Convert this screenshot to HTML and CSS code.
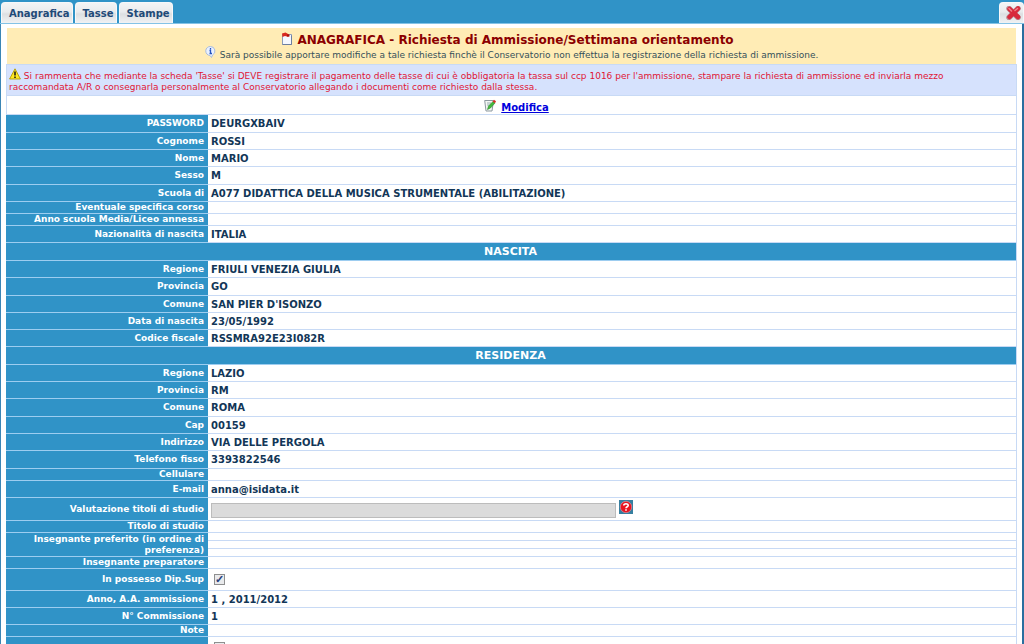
FILE: index.html
```html
<!DOCTYPE html>
<html lang="it">
<head>
<meta charset="utf-8">
<title>Anagrafica - Richiesta di Ammissione</title>
<link rel="stylesheet" href="styles.css">
</head>
<body>
<header class="topbar">
  <nav class="tabs">
    <a class="tab" href="#anagrafica">Anagrafica</a>
    <a class="tab" href="#tasse">Tasse</a>
    <a class="tab" href="#stampe">Stampe</a>
  </nav>
  <button class="close" type="button" aria-label="Chiudi">
    <svg width="15" height="14" viewBox="0 0 15 14"><path d="M3 2.500 12 11.500M12 2.500 3 11.500" stroke="#b9929a" stroke-width="5.500" stroke-linecap="round"/><path d="M3.500 3 12 11M12 2.500 3.500 11" stroke="#d8293c" stroke-width="4.500" stroke-linecap="round"/><path d="M3 2.500 5.500 5M11.500 2.500 9 4.500" stroke="#f0808a" stroke-width="1.500" stroke-linecap="round"/></svg>
  </button>
</header>
<main class="page">
  <section class="intro">
    <h1 class="title">
      <svg class="icon-doc" width="12" height="13" viewBox="0 0 12 13"><path d="M1.500 2.500h9v10h-9z" fill="#f5f8ff" stroke="#8b9cb8"/><path d="M1.500 12.500h9v-9" fill="none" stroke="#6d7f9f"/><path d="M1 1.500 4.500 0.500 8 2.500 7.500 5 4 4 1.500 5z" fill="#d92a20"/><path d="M6 2.500h2.500v2H6z" fill="#a8140f"/></svg>
      <span>ANAGRAFICA - Richiesta di Ammissione/Settimana orientamento</span>
    </h1>
    <p class="hint">
      <svg class="icon-info" width="11" height="12" viewBox="0 0 11 12"><path d="M5.500.5a4.500 4.500 0 0 1 2 8.500L6.500 11.500 5 9.500A4.500 4.500 0 0 1 5.500.5z" fill="#eaf1ff" stroke="#a9bcdc"/><path d="M5.500 2v1.500M4.500 4.500h1v3M4.500 7.500h2.500" fill="none" stroke="#2454c0" stroke-width="1.300"/></svg>
      <span>Sarà possibile apportare modifiche a tale richiesta finchè il Conservatorio non effettua la registrazione della richiesta di ammissione.</span>
    </p>
  </section>
  <p class="warning"><svg class="icon-warn" width="12" height="12" viewBox="0 0 12 12"><path d="M6 .8 11.400 11H.6z" fill="#ffe91f" stroke="#b7a113" stroke-linejoin="round"/><path d="M6 3.500v4M6 8.500v1.500" stroke="#111" stroke-width="1.500"/></svg> Si rammenta che mediante la scheda 'Tasse' si DEVE registrare il pagamento delle tasse di cui è obbligatoria la tassa sul ccp 1016 per l'ammissione, stampare la richiesta di ammissione ed inviarla mezzo<br>raccomandata A/R o consegnarla personalmente al Conservatorio allegando i documenti come richiesto dalla stessa.</p>
  <div class="actions">
    <svg width="12" height="13" viewBox="0 0 12 13"><path d="M.7 1.500h8.800L8 12H2z" fill="#f4f7f4" stroke="#8d99a0"/><path d="M3 4h4M3 6h2.500" stroke="#9aaeb5"/><path d="M3.500 10.500 4.500 7 9 2.500l2 1.500-4.500 5z" fill="#42b83c" stroke="#2d8b2c" stroke-width=".6"/><path d="M8.500 2.500 10 .7l2 1.500L11 4.300z" fill="#d5302b"/></svg>
    <a class="edit" href="#modifica">Modifica</a>
  </div>
  <table class="record">
    <colgroup><col class="col-label"><col></colgroup>
    <tbody>
      <tr class="tall"><th scope="row">PASSWORD</th><td>DEURGXBAIV</td></tr>
      <tr><th scope="row">Cognome</th><td>ROSSI</td></tr>
      <tr><th scope="row">Nome</th><td>MARIO</td></tr>
      <tr class="tall"><th scope="row">Sesso</th><td>M</td></tr>
      <tr><th scope="row">Scuola di</th><td>A077 DIDATTICA DELLA MUSICA STRUMENTALE (ABILITAZIONE)</td></tr>
      <tr class="empty"><th scope="row">Eventuale specifica corso</th><td></td></tr>
      <tr class="empty"><th scope="row">Anno scuola Media/Liceo annessa</th><td></td></tr>
      <tr><th scope="row">Nazionalità di nascita</th><td>ITALIA</td></tr>
    </tbody>
    <tbody>
      <tr class="tall"><th class="section" colspan="2" scope="rowgroup">NASCITA</th></tr>
      <tr><th scope="row">Regione</th><td>FRIULI VENEZIA GIULIA</td></tr>
      <tr class="tall"><th scope="row">Provincia</th><td>GO</td></tr>
      <tr><th scope="row">Comune</th><td>SAN PIER D'ISONZO</td></tr>
      <tr><th scope="row">Data di nascita</th><td>23/05/1992</td></tr>
      <tr><th scope="row">Codice fiscale</th><td>RSSMRA92E23I082R</td></tr>
    </tbody>
    <tbody>
      <tr class="tall"><th class="section" colspan="2" scope="rowgroup">RESIDENZA</th></tr>
      <tr><th scope="row">Regione</th><td>LAZIO</td></tr>
      <tr><th scope="row">Provincia</th><td>RM</td></tr>
      <tr class="tall"><th scope="row">Comune</th><td>ROMA</td></tr>
      <tr><th scope="row">Cap</th><td>00159</td></tr>
      <tr><th scope="row">Indirizzo</th><td>VIA DELLE PERGOLA</td></tr>
      <tr class="tall"><th scope="row">Telefono fisso</th><td>3393822546</td></tr>
      <tr class="empty"><th scope="row">Cellulare</th><td></td></tr>
      <tr><th scope="row">E-mail</th><td>anna@isidata.it</td></tr>
      <tr class="field"><th scope="row"><label for="titoli">Valutazione titoli di studio</label></th><td>
        <div class="field-line">
          <input class="text" id="titoli" type="text" disabled>
          <button class="help" type="button" aria-label="Aiuto"><svg width="14" height="14" viewBox="0 0 14 14"><path d="M0 0h14v14H0z" fill="#367fa0"/><circle cx="7" cy="7" r="5.700" fill="#e8151f" stroke="#d98a95" stroke-width=".8"/><path d="M4.800 5.500C4.800 3.200 9.300 3.300 9.200 5.500 9.200 6.800 7 6.700 7 8.300M7 9.300v1.500" fill="none" stroke="#fff" stroke-width="1.600"/></svg></button>
        </div></td></tr>
      <tr class="empty"><th scope="row">Titolo di studio</th><td></td></tr>
      <tr class="choice"><th scope="rowgroup" rowspan="3">Insegnante preferito (in ordine di<br>preferenza)</th><td></td></tr>
      <tr class="choice"><td></td></tr>
      <tr class="choice"><td></td></tr>
      <tr class="empty"><th scope="row">Insegnante preparatore</th><td></td></tr>
      <tr class="check"><th scope="row"><label for="dipsup">In possesso Dip.Sup</label></th><td><input class="box" id="dipsup" type="checkbox" checked></td></tr>
      <tr><th scope="row">Anno, A.A. ammissione</th><td>1 , 2011/2012</td></tr>
      <tr><th scope="row">N° Commissione</th><td>1</td></tr>
      <tr class="empty"><th scope="row">Note</th><td></td></tr>
      <tr class="check"><th scope="row"></th><td><input class="box" type="checkbox" aria-label="Conferma"></td></tr>
    </tbody>
  </table>
</main>
</body>
</html>
```

FILE: styles.css
```css
* { box-sizing: border-box; }

body {
  margin: 0;
  height: 100vh;
  overflow: hidden;
  background: #fff;
  color: #123657;
  font-family: Verdana, "DejaVu Sans", sans-serif;
  font-size: 10px;
  line-height: 11px;
}

svg { display: block; flex: none; }

.topbar {
  display: flex;
  justify-content: space-between;
  align-items: flex-end;
  height: 24px;
  padding: 0 0 0 1px;
  background: #3093c7;
  border-bottom: 1px solid #84c3e6;
}

.tabs { display: flex; gap: 2px; }

.tab, .close {
  display: flex;
  align-items: center;
  justify-content: center;
  height: 21px;
  border: 1px solid #f6f8fa;
  border-bottom: 0;
  border-radius: 4px 4px 0 0;
  background: linear-gradient(#f3f4f5, #e9ebed 45%, #dcdfe2 55%, #f1f2f3);
}

.tab {
  padding: 0 2px 0 7px;
  color: #1f4a78;
  font-weight: bold;
  text-decoration: none;
}

.close { width: 25px; padding: 0 0 0 4px; }

.page {
  min-height: calc(100vh - 24px);
  padding: 4px 5px 0;
  border-left: 1px solid #3a85b5;
  border-right: 2px solid #2a6f9f;
}

.intro { padding: 4px 0 0; height: 36px; background: #ffecb5; margin: 0 1px; }

.title, .hint {
  display: flex;
  justify-content: center;
  margin: 0;
}

.title {
  gap: 4px;
  padding-right: 8px;
  color: #8b0000;
  font-size: 12px;
  line-height: 16px;
}

.hint { gap: 4px; color: #35505a; font-size: 9px; line-height: 15px; }
.icon-info { margin-top: -2px; }

.warning {
  margin: 0;
  height: 32px;
  padding: 3px 2px 0;
  border: 1px solid #c8daf5;
  background: #d6e2fd;
  color: #e01535;
  font-size: 9px;
}

.icon-warn { display: inline-block; vertical-align: -1px; }

.actions {
  display: flex;
  justify-content: center;
  gap: 5px;
  height: 19px;
  padding: 3px 0 0 10px;
  border: 1px solid #c8daf5;
  border-top: 0;
}

.edit { color: #0000dd; font-weight: bold; line-height: 18px; }

.record {
  width: 100%;
  table-layout: fixed;
  border-collapse: separate;
  border-spacing: 0;
  border-right: 1px solid #c8daf5;
}

.col-label { width: 202px; }

.record tr { height: 17px; }
.record .tall { height: 18px; }
.record .empty { height: 12px; }
.record .choice { height: 8px; }
.record .field { height: 23px; }
.record .check { height: 22px; }

.record th, .record td {
  padding: 0 3px;
  border-bottom: 1px solid #c8daf5;
  font-weight: bold;
  text-align: left;
  vertical-align: middle;
}

.record th {
  padding-right: 4px;
  background: #3093c7;
  border-bottom-color: #9dcdf0;
  color: #fff;
  font-size: 9px;
  text-align: right;
}

.record .section { font-size: 11px; text-align: center; }

.field-line { display: flex; align-items: flex-start; gap: 3px; }

.text {
  width: 405px;
  height: 15px;
  margin-top: 3px;
  padding: 0;
  border: 1px solid #bcbcbc;
  background: #dbdbdb;
}

.help { padding: 0; border: 0; background: none; }

.box {
  appearance: none;
  display: block;
  width: 11px;
  height: 11px;
  margin: 0 0 0 3px;
  border: 1px solid #8e8f8f;
  background: #e9eaec;
}

.box:checked::after {
  content: "✓";
  display: block;
  color: #27407c;
  font-size: 11px;
  font-weight: bold;
  line-height: 9px;
}
```
